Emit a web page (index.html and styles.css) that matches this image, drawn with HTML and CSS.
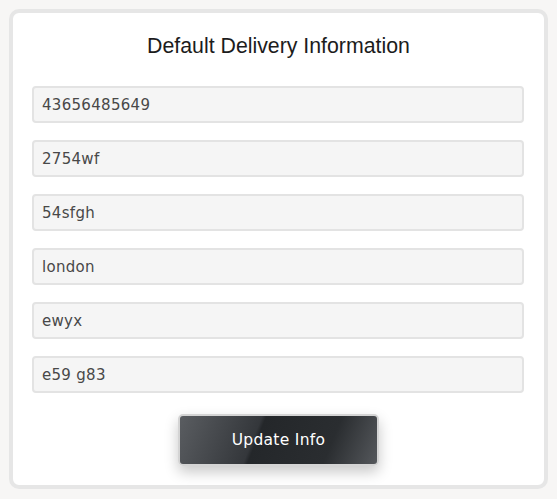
FILE: index.html
```html
<!DOCTYPE html>
<html>
<head>
<meta charset="utf-8">
<link rel="stylesheet" href="styles.css">
</head>
<body>
<div class="card">
  <h2 class="title">Default Delivery Information</h2>
  <form class="form">
    <input class="field" type="text" value="43656485649">
    <input class="field" type="text" value="2754wf">
    <input class="field" type="text" value="54sfgh">
    <input class="field" type="text" value="london">
    <input class="field" type="text" value="ewyx">
    <input class="field" type="text" value="e59 g83">
    <div class="actions">
      <button class="btn" type="button">Update Info</button>
    </div>
  </form>
</div>
</body>
</html>
```
FILE: styles.css
```css
html, body {
  margin: 0;
  padding: 0;
  background: #f7f6f5;
}
body {
  padding: 9px;
  width: 539px;
  box-sizing: content-box;
}
.card {
  box-sizing: border-box;
  width: 539px;
  height: 480px;
  border: 4px solid #e6e6e6;
  border-radius: 10px;
  background: #ffffff;
  padding: 19px;
}
.title {
  margin: 0;
  padding-top: 2px;
  height: 52px;
  text-align: center;
  font-family: "Liberation Sans", Arial, sans-serif;
  font-weight: normal;
  font-size: 21.3px;
  line-height: 24px;
  color: #1c1c1c;
}
.form {
  display: flex;
  flex-direction: column;
  gap: 17px;
  margin: 0;
}
.field {
  box-sizing: border-box;
  width: 492px;
  height: 37px;
  margin: 0;
  border: 2px solid #e3e3e3;
  border-radius: 4px;
  background: #f5f5f5;
  padding: 0 8px;
  font-family: "DejaVu Sans", Verdana, sans-serif;
  font-size: 15px;
  letter-spacing: 0.3px;
  color: #484848;
  outline: none;
}
.actions {
  display: flex;
  justify-content: center;
  padding-top: 4px;
}
.btn {
  box-sizing: border-box;
  width: 201px;
  height: 52px;
  border: 2px solid #d4d4d4;
  border-radius: 5px;
  background: linear-gradient(112deg, #5a5d61 0%, #34373b 38%, #24272a 40%, #2a2d30 75%, #55585c 100%);
  box-shadow: 0 6px 14px rgba(0,0,0,0.22);
  color: #ffffff;
  font-family: "DejaVu Sans", Verdana, sans-serif;
  font-size: 15.5px;
  letter-spacing: 0.3px;
  cursor: pointer;
}
```
